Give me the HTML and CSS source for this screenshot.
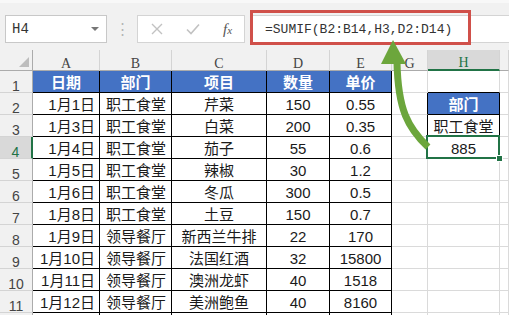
FILE: index.html
```html
<!DOCTYPE html>
<html lang="zh-CN">
<head>
  <meta charset="UTF-8" />
  <title>SUMIF</title>
  <link rel="stylesheet" href="styles.css">
</head>
<body>
  <div class="formula-bar">
    <div class="name-box"><span>H4</span><span class="caret"></span></div>
    <div class="grip">⋮</div>
    <div class="fx-box">
      <svg class="btn-icon" width="12" height="12" viewBox="0 0 12 12"><path d="M1 1 L11 11 M11 1 L1 11" stroke="#c2c2c2" stroke-width="1.4" fill="none"/></svg>
      <svg class="btn-icon" width="14" height="12" viewBox="0 0 14 12"><path d="M1 6.5 L5 10.5 L13 1.5" stroke="#c2c2c2" stroke-width="1.6" fill="none"/></svg>
      <span class="fx">f<small>x</small></span>
    </div>
    <div class="formula">=SUMIF(B2:B14,H3,D2:D14)</div>
  </div>

  <div class="sheet">
    <div class="row head">
      <div class="cell corner"><span class="tri"></span></div>
      <div class="cell col">A</div><div class="cell col">B</div><div class="cell col">C</div>
      <div class="cell col">D</div><div class="cell col">E</div><div class="cell col">G</div>
      <div class="cell col sel">H</div><div class="cell col"></div>
    </div>
    <div class="row">
      <div class="cell rh">1</div>
      <div class="cell t th">日期</div><div class="cell t th">部门</div><div class="cell t th">项目</div>
      <div class="cell t th">数量</div><div class="cell t th">单价</div>
      <div class="cell"></div><div class="cell top-t"></div><div class="cell"></div>
    </div>
    <div class="row">
      <div class="cell rh">2</div>
      <div class="cell t r">1月1日</div><div class="cell t l">职工食堂</div><div class="cell t">芹菜</div>
      <div class="cell t">150</div><div class="cell t">0.55</div>
      <div class="cell left-t"></div><div class="cell t th">部门</div><div class="cell"></div>
    </div>
    <div class="row">
      <div class="cell rh">3</div>
      <div class="cell t r">1月3日</div><div class="cell t l">职工食堂</div><div class="cell t">白菜</div>
      <div class="cell t">200</div><div class="cell t">0.35</div>
      <div class="cell left-t"></div><div class="cell t">职工食堂</div><div class="cell"></div>
    </div>
    <div class="row">
      <div class="cell rh sel">4</div>
      <div class="cell t r">1月4日</div><div class="cell t l">职工食堂</div><div class="cell t">茄子</div>
      <div class="cell t">55</div><div class="cell t">0.6</div>
      <div class="cell"></div><div class="cell active">885</div><div class="cell"></div>
    </div>
    <div class="row">
      <div class="cell rh">5</div>
      <div class="cell t r">1月5日</div><div class="cell t l">职工食堂</div><div class="cell t">辣椒</div>
      <div class="cell t">30</div><div class="cell t">1.2</div>
      <div class="cell"></div><div class="cell"></div><div class="cell"></div>
    </div>
    <div class="row">
      <div class="cell rh">6</div>
      <div class="cell t r">1月6日</div><div class="cell t l">职工食堂</div><div class="cell t">冬瓜</div>
      <div class="cell t">300</div><div class="cell t">0.5</div>
      <div class="cell"></div><div class="cell"></div><div class="cell"></div>
    </div>
    <div class="row">
      <div class="cell rh">7</div>
      <div class="cell t r">1月8日</div><div class="cell t l">职工食堂</div><div class="cell t">土豆</div>
      <div class="cell t">150</div><div class="cell t">0.7</div>
      <div class="cell"></div><div class="cell"></div><div class="cell"></div>
    </div>
    <div class="row">
      <div class="cell rh">8</div>
      <div class="cell t r">1月9日</div><div class="cell t l">领导餐厅</div><div class="cell t">新西兰牛排</div>
      <div class="cell t">22</div><div class="cell t">170</div>
      <div class="cell"></div><div class="cell"></div><div class="cell"></div>
    </div>
    <div class="row">
      <div class="cell rh">9</div>
      <div class="cell t r">1月10日</div><div class="cell t l">领导餐厅</div><div class="cell t">法国红酒</div>
      <div class="cell t">32</div><div class="cell t">15800</div>
      <div class="cell"></div><div class="cell"></div><div class="cell"></div>
    </div>
    <div class="row">
      <div class="cell rh">10</div>
      <div class="cell t r">1月11日</div><div class="cell t l">领导餐厅</div><div class="cell t">澳洲龙虾</div>
      <div class="cell t">40</div><div class="cell t">1518</div>
      <div class="cell"></div><div class="cell"></div><div class="cell"></div>
    </div>
    <div class="row">
      <div class="cell rh">11</div>
      <div class="cell t r">1月12日</div><div class="cell t l">领导餐厅</div><div class="cell t">美洲鲍鱼</div>
      <div class="cell t">40</div><div class="cell t">8160</div>
      <div class="cell"></div><div class="cell"></div><div class="cell"></div>
    </div>
    <div class="row stub">
      <div class="cell rh"></div>
      <div class="cell t"></div><div class="cell t"></div><div class="cell t"></div>
      <div class="cell t"></div><div class="cell t"></div>
      <div class="cell"></div><div class="cell"></div><div class="cell"></div>
    </div>
  </div>

  <!-- annotation: red frame round the formula and arrow from the result -->
  <div class="red-frame"></div>
  <svg class="arrow" width="509" height="315" viewBox="0 0 509 315">
    <path d="M428 147 C408 128 398 110 397 62" stroke="#6ca63c" stroke-width="7" fill="none"/>
    <polygon points="381,64 393,40 406,64" fill="#6ca63c"/>
  </svg>
</body>
</html>
```

FILE: styles.css
```css
body { margin: 0; width: 509px; height: 315px; overflow: hidden; position: relative; background: #fff; font-family: "Liberation Sans", "Noto Sans CJK SC", sans-serif; }

.formula-bar { height: 50px; box-sizing: border-box; padding: 15px 0 0 5px; display: flex; align-items: flex-start; background: #f1f1f1; border-top: 3px solid #f8f8f8; }
.formula-bar > div { height: 28px; box-sizing: border-box; }
.name-box { width: 102px; margin-top: -3px; border: 1px solid #c8c8c8; background: #fff; display: flex; align-items: center; justify-content: space-between; padding: 0 7px 0 6px; font: 14px "Liberation Mono", monospace; color: #333; }
.caret { width: 0; height: 0; border-left: 4px solid transparent; border-right: 4px solid transparent; border-top: 4px solid #777; }
.grip { width: 30px; margin-top: -3px; display: flex; align-items: center; justify-content: center; color: #b5b5b5; font-size: 15px; }
.fx-box { width: 108px; margin-top: -3px; border: 1px solid #d4d4d4; background: #fff; display: flex; align-items: center; padding-left: 13px; gap: 23px; }
.fx { font: italic 15px "Liberation Serif", serif; color: #555; }
.fx small { font-size: 11px; }
.formula { flex: 1; margin: -3px 0 0 5px; background: #fff; border-top: 1px solid #d4d4d4; border-bottom: 1px solid #d4d4d4; display: flex; align-items: center; padding-left: 15px; font: 13px "Liberation Mono", monospace; color: #333; }

.row { display: grid; grid-template-columns: 33px 67px 72px 95px 63px 62px 36px 72px 9px; height: 22px; }
.row.head { height: 21px; }
.row.stub { height: 2px; }
.cell { box-sizing: border-box; border-right: 1px solid #dadada; border-bottom: 1px solid #dadada; display: flex; align-items: flex-end; justify-content: center; line-height: 18px; font-size: 15px; color: #1a1a1a; white-space: nowrap; overflow: hidden; }
.stub .cell { border-bottom: 0; }

.head .cell { background: #f1f1f1; border-right-color: #d4d4d4; border-bottom-color: #ababab; font: 14px "Liberation Serif", serif; line-height: 13px; color: #444; }
.corner { position: relative; border-right-color: #ababab !important; }
.tri { position: absolute; right: 3px; bottom: 3px; width: 0; height: 0; border-left: 10px solid transparent; border-bottom: 10px solid #bdbdbd; }
.head .col.sel { background: #d9d9d9; color: #217346; border-bottom: 2px solid #217346; }

.rh { background: #f1f1f1; border-right-color: #ababab; border-bottom-color: #d4d4d4; font-size: 14px; line-height: 12px; color: #444; }
.rh.sel { background: #d9d9d9; color: #217346; border-right: 2px solid #217346; }

.t { border-right-color: #000; border-bottom-color: #000; }
.th { background: #4472c4; color: #fff; font-weight: bold; }
.top-t { border-bottom-color: #000; }
.left-t { border-right-color: #000; }
.r { justify-content: flex-end; padding-right: 4px; }
.l { justify-content: flex-start; padding-left: 6px; }

.active { position: relative; overflow: visible; }
.active::after { content: ""; position: absolute; left: -2px; top: -2px; right: -1px; bottom: -1px; border: 2px solid #217346; }
.active::before { content: ""; position: absolute; right: -4px; bottom: -4px; width: 5px; height: 5px; background: #217346; border: 1px solid #fff; z-index: 1; }

.red-frame { position: absolute; left: 250px; top: 10px; width: 221px; height: 35px; box-sizing: border-box; border: 3px solid #d0504a; }
.arrow { position: absolute; left: 0; top: 0; pointer-events: none; }
```
